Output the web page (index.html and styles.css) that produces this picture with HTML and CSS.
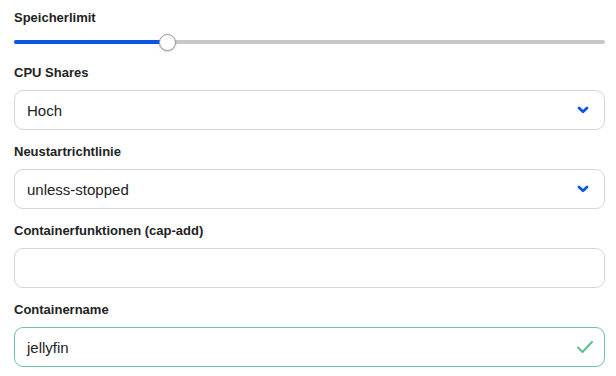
FILE: index.html
```html
<!DOCTYPE html>
<html lang="de">
<head>
    <meta charset="UTF-8">
    <title>Container</title>
    <link rel="stylesheet" href="styles.css">
</head>
<body>
<div class="form">
    <div class="field field-slider">
        <label class="label">Speicherlimit</label>
        <div class="slider">
            <div class="fill"></div>
            <div class="thumb"></div>
        </div>
    </div>
    <div class="field">
        <label class="label">CPU Shares</label>
        <div class="input select">
            <span>Hoch</span>
            <svg class="chev" width="12" height="8" viewBox="0 0 12 8"><path d="M2 2 6 5.8 10 2" fill="none" stroke="#0b57e3" stroke-width="2.8" stroke-linecap="round" stroke-linejoin="round"/></svg>
        </div>
    </div>
    <div class="field">
        <label class="label">Neustartrichtlinie</label>
        <div class="input select">
            <span>unless-stopped</span>
            <svg class="chev" width="12" height="8" viewBox="0 0 12 8"><path d="M2 2 6 5.8 10 2" fill="none" stroke="#0b57e3" stroke-width="2.8" stroke-linecap="round" stroke-linejoin="round"/></svg>
        </div>
    </div>
    <div class="field">
        <label class="label">Containerfunktionen (cap-add)</label>
        <div class="input"></div>
    </div>
    <div class="field">
        <label class="label">Containername</label>
        <div class="input valid">
            <span>jellyfin</span>
            <svg class="check" width="18" height="14" viewBox="0 0 18 14"><path d="M2 7.5 6.5 12 16 2" fill="none" stroke="#5cbf8d" stroke-width="2" stroke-linecap="round" stroke-linejoin="round"/></svg>
        </div>
    </div>
</div>
</body>
</html>
```

FILE: styles.css
```css
body {
    margin: 0;
    background: #fff;
    font-family: "Liberation Sans", Arial, sans-serif;
    color: #222;
}
.form {
    padding: 9px 11px 0 14px;
}
.field {
    margin-bottom: 13px;
}
.field-slider {
    margin-bottom: 14px;
}
.label {
    display: block;
    font-size: 13px;
    font-weight: bold;
    line-height: 17px;
    margin-bottom: 9px;
    color: #222;
}
.slider {
    position: relative;
    height: 16px;
    margin-top: -1px;
}
.slider::before {
    content: "";
    position: absolute;
    left: 0;
    right: 0;
    top: 6px;
    height: 4px;
    border-radius: 2px;
    background: #c8c8c8;
}
.fill {
    position: absolute;
    left: 0;
    top: 6px;
    height: 4px;
    width: 153px;
    border-radius: 2px;
    background: #0b57e3;
}
.thumb {
    position: absolute;
    left: 145px;
    top: 0;
    width: 15px;
    height: 15px;
    border-radius: 50%;
    background: #fff;
    border: 1px solid #9a9a9a;
    box-shadow: 0 1px 2px rgba(0,0,0,0.2);
}
.input {
    height: 40px;
    box-sizing: border-box;
    border: 1px solid #d6d6d6;
    border-radius: 9px;
    display: flex;
    align-items: center;
    justify-content: space-between;
    padding: 0 15px 0 12px;
    font-size: 15px;
    color: #222;
}
.valid {
    border-color: #6cc79a;
    padding-right: 10px;
}
.chev {
    margin-right: 0;
}
```
